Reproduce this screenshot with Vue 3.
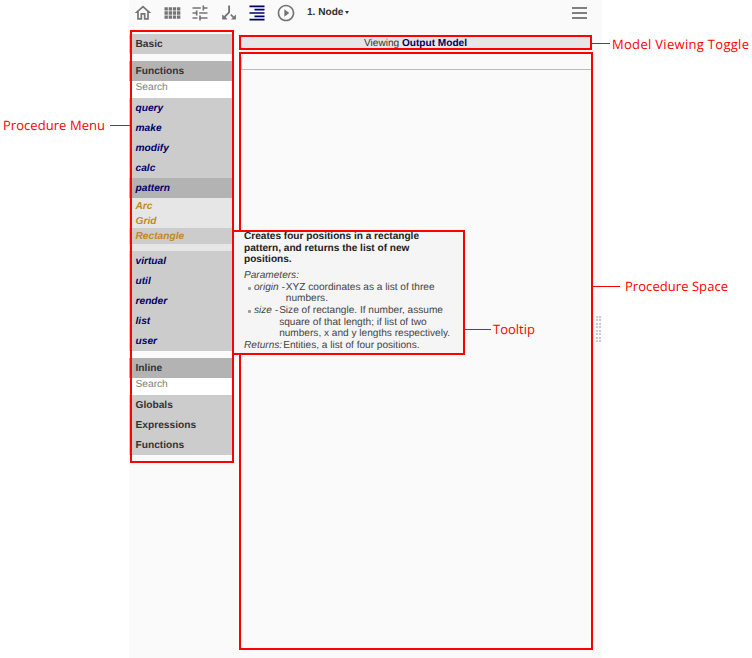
<script setup>
const icons = [
  { name: 'home', cls: 'home', d: 'M12 5.69l5 4.5V18h-2v-6H9v6H7v-7.81l5-4.5M12 3L2 12h3v8h6v-6h2v6h6v-8h3L12 3z' },
  { name: 'gallery', cls: '', d: 'M3 9h4V5H3v4zm0 5h4v-4H3v4zm5 0h4v-4H8v4zm5 0h4v-4h-4v4zM8 9h4V5H8v4zm5-4v4h4V5h-4zm5 9h4v-4h-4v4zM3 19h4v-4H3v4zm5 0h4v-4H8v4zm5 0h4v-4h-4v4zm5 0h4v-4h-4v4zm0-14v4h4V5h-4z' },
  { name: 'dashboard', cls: '', d: 'M3 17v2h6v-2H3zM3 5v2h10V5H3zm10 16v-2h8v-2h-8v-2h-2v6h2zM7 9v2H3v2h4v2h2V9H7zm14 4v-2H11v2h10zm-6-4h2V7h4V5h-4V3h-2v6z' },
  { name: 'flowchart', cls: '', d: 'M11 3h2.200v8.600l-5.200 5.200L10 19.800H3.800V13.800L6.200 15.600 11 10.800zM14.800 13.200L17.900 16.300 20.300 13.800V19.800H14.200L16.500 17.700 13.400 14.600z' },
  { name: 'editor', cls: 'active', d: 'M3 21h18v-2H3v2zm6-4h12v-2H9v2zm-6-4h18v-2H3v2zm6-4h12V7H9v2zM3 3v2h18V3H3z' },
  { name: 'execute', cls: '', d: 'M10 16.5l6-4.500-6-4.500v9zM12 2C6.480 2 2 6.480 2 12s4.480 10 10 10 10-4.480 10-10S17.520 2 12 2zm0 18c-4.410 0-8-3.590-8-8s3.590-8 8-8 8 3.590 8 8-3.590 8-8 8z' },
]
const before = ['query', 'make', 'modify', 'calc']
const after = ['virtual', 'util', 'render', 'list', 'user']
const inline = ['Globals', 'Expressions', 'Functions']
</script>

<template>
  <div class="page">
    <main class="app">
      <header class="toolbar">
        <svg v-for="i in icons" :key="i.name" class="icon" :class="i.cls" viewBox="0 0 24 24"><path :d="i.d" /></svg>
        <span class="node">1. Node <svg class="caret" viewBox="0 0 4 3"><path d="M0 0h4L2 3z" /></svg></span>
        <span class="burger"><i></i><i></i><i></i></span>
      </header>
      <div class="body">
        <nav class="menu">
          <div class="row">Basic</div>
          <div class="gap"></div>
          <div class="row dark">Functions</div>
          <div class="search">Search</div>
          <div v-for="n in before" :key="n" class="row fn">{{ n }}</div>
          <div class="row fn dark">pattern</div>
          <div class="sub">
            <div class="leaf">Arc</div>
            <div class="leaf">Grid</div>
            <div class="leaf hover">Rectangle</div>
          </div>
          <div v-for="n in after" :key="n" class="row fn">{{ n }}</div>
          <div class="gap"></div>
          <div class="row dark">Inline</div>
          <div class="search">Search</div>
          <div v-for="n in inline" :key="n" class="row">{{ n }}</div>
        </nav>
        <section class="content">
          <div class="toggle">Viewing&nbsp;<b>Output Model</b></div>
          <div class="space"><div class="start"></div></div>
        </section>
        <div class="grip"><i v-for="n in 16" :key="n"></i></div>
      </div>
    </main>

    <div class="tooltip">
      <b class="summary">Creates four positions in a rectangle<br>pattern, and returns the list of new<br>positions.</b>
      <div class="params"><em>Parameters:</em></div>
      <div class="param"><i class="dot"></i><em>origin -</em><span>XYZ coordinates as a list of three<br>numbers.</span></div>
      <div class="param"><i class="dot"></i><em>size -</em><span>Size of rectangle. If number, assume<br>square of that length; if list of two<br>numbers, x and y lengths respectively.</span></div>
      <div class="returns"><em>Returns:</em><span>Entities, a list of four positions.</span></div>
    </div>

    <svg class="notes" viewBox="0 0 752 658">
      <g class="frames">
        <path d="M240 231V53H592V649H240V355" />
        <rect x="240" y="36" width="351" height="13" />
        <rect x="131" y="31" width="102" height="431" />
        <rect x="233" y="231" width="231" height="123" />
      </g>
      <g class="leaders">
        <path d="M110 125.500H131M592 43.500H610M593 286.500H620M465 329.500H491" />
      </g>
      <text x="3" y="130" textLength="102">Procedure Menu</text>
      <text x="612" y="49" textLength="137">Model Viewing Toggle</text>
      <text x="625" y="291" textLength="103">Procedure Space</text>
      <text x="493" y="334" textLength="42">Tooltip</text>
    </svg>
  </div>
</template>

<style>
body { margin: 0; background: #fff; }
</style>

<style scoped>
.page { position: relative; width: 752px; height: 658px; overflow: hidden; box-sizing: border-box; padding-left: 129px; font-family: "Liberation Sans", Arial, sans-serif; font-size: 10.100px; text-rendering: geometricPrecision; color: #333; }
.app { width: 473px; height: 658px; background: #fafafa; display: flex; flex-direction: column; }
.toolbar { height: 25px; display: flex; align-items: center; gap: 8.500px; padding: 0 15px 0 4px; margin-bottom: 9px; }
.icon { width: 20px; height: 20px; fill: #757575; flex: none; }
.active { fill: #00006b; }
.node { font-weight: bold; margin-left: 3px; display: flex; align-items: center; gap: 2px; }
.caret { width: 4px; height: 3px; fill: #333; }
.burger { margin-left: auto; width: 15px; display: flex; flex-direction: column; gap: 3px; }
.burger i { height: 2px; background: #808080; }
.body { flex: 1; display: flex; align-items: flex-start; }
.menu { width: 103px; flex: none; font-weight: bold; font-size: 10.200px; }
.row { height: 20px; line-height: 22px; padding-left: 6.500px; background: #ccc; }
.dark { background: #b3b3b3; }
.fn { color: #00006b; font-style: italic; }
.gap { height: 7px; }
.search { height: 17px; line-height: 14px; padding-left: 6.500px; background: #fff; color: #808080; font-weight: normal; }
.sub { height: 53px; background: #e6e6e6; color: #c08a1e; font-style: italic; }
.leaf { height: 15px; line-height: 18px; padding-left: 6.500px; }
.hover { height: 16px; background: #ccc; }
.content { width: 351px; margin: 1px 0 0 8px; }
.toggle { height: 15px; line-height: 17px; background: #e6e6e6; display: flex; justify-content: center; }
.toggle b { color: #00006b; }
.space { margin-top: 7px; }
.start { height: 12px; border-left: 1px solid #ccc; border-bottom: 1px solid #bbb; margin-left: 1px; }
.grip { width: 5px; height: 26px; margin: 282px 0 0 5px; display: grid; grid-template-columns: 2px 2px; column-gap: 1px; align-content: space-between; }
.grip i { height: 2px; background: #ccc; }
.tooltip { position: absolute; left: 233px; top: 231px; width: 231px; height: 123px; box-sizing: border-box; padding-left: 11px; background: #f5f5f5; line-height: 11.650px; white-space: nowrap; color: #444; }
.summary { display: block; color: #222; }
.params { margin-top: 4px; }
.param { display: flex; padding-left: 4px; }
.param em { margin: 0 1px 0 3px; }
.dot { width: 3px; height: 3px; margin-top: 5px; border-radius: 1px; background: #999; }
.returns { display: flex; gap: 1px; }
.notes { position: absolute; left: 0; top: 0; width: 752px; height: 658px; }
.frames { fill: none; stroke: #f00; stroke-width: 2; }
.leaders { fill: none; stroke: #f00; stroke-width: 1; }
.notes text { font-family: "Open Sans", "Noto Sans", sans-serif; font-size: 13px; fill: #f00; }
</style>
